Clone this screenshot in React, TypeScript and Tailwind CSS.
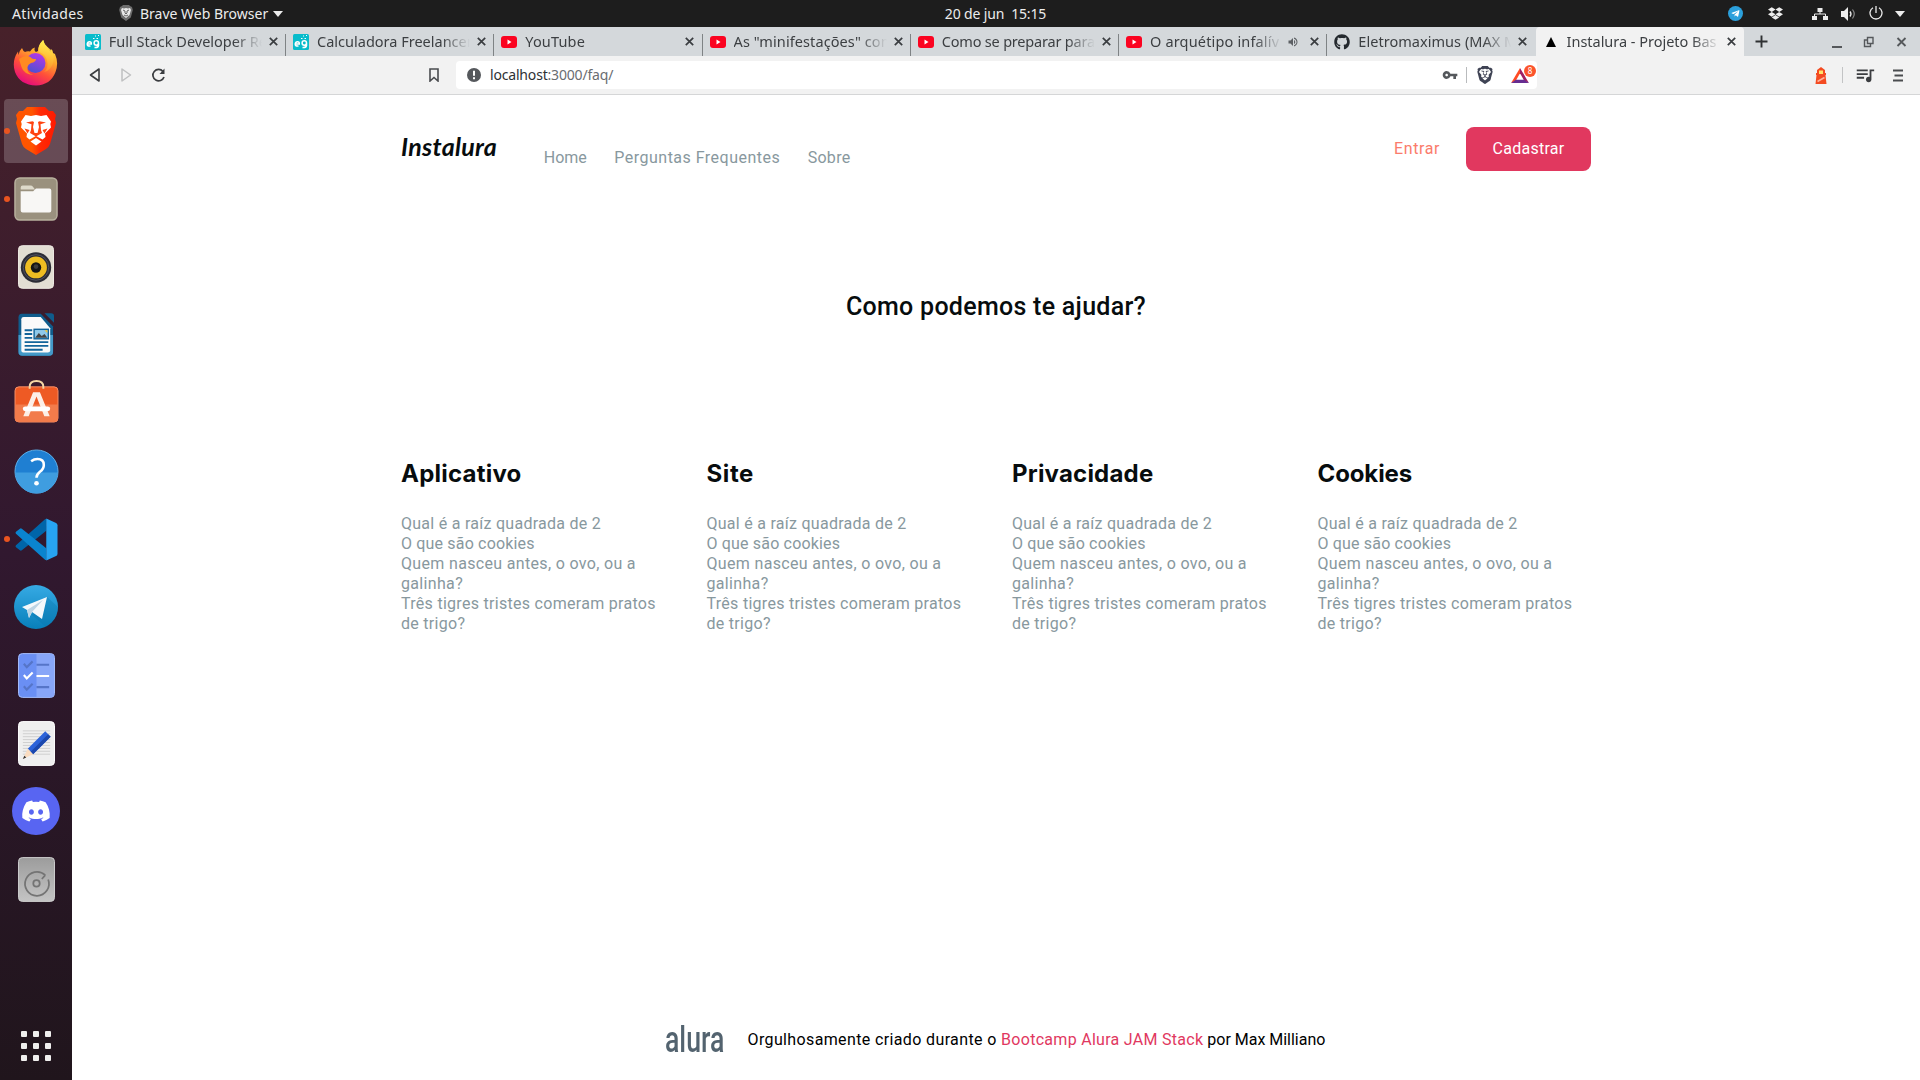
import type { ReactNode } from "react";
import { FaDiscord, FaDropbox, FaGithub, FaTelegramPlane } from "react-icons/fa";
import { MdQueueMusic, MdVolumeUp, MdVpnKey } from "react-icons/md";
import { SiBrave } from "react-icons/si";

/* ---------- Top bar ---------- */

function TopBar() {
  return (
    <header className="grid h-[27px] grid-cols-[1fr_auto_1fr] items-center bg-[#1d1d1d] font-['Noto_Sans',sans-serif] text-[14px] leading-[27px] text-[#ececec]">
      <div className="flex items-center">
        <span className="ml-[12px] w-[107px] tracking-[0.35px]">Atividades</span>
        <svg width="14" height="16" viewBox="0 0 14 16" className="-mt-px">
          <path d="M3 1 4 0h6l1 1 2 1 .8 3-2 7.5L7 16l-4.800-3.500L.2 5 1 2Z" fill="#6d6d6d" />
          <path d="m3 3 2 .5L7 3l2 .5L11 3l1 2-1.500 5L7 13l-3.500-3L2 5Z" fill="#e8e8e8" />
          <path d="m4 5 2 1v2l1 1 1-1V6l2-1M5 10l2 1 2-1" stroke="#666" fill="none" />
        </svg>
        <span className="ml-[7px]">Brave Web Browser</span>
        <svg width="10" height="6" className="ml-[5px]"><path d="M0 0h10L5 6z" fill="#ececec" /></svg>
      </div>
      <span className="ml-[71px] whitespace-pre tracking-[-0.15px]">20 de jun  15:15</span>
      <div className="flex items-center justify-end pr-[15px]">
        <span className="flex size-[15px] items-center justify-center rounded-full bg-[#2ba0dc] text-white">
          <FaTelegramPlane size={9} />
        </span>
        <FaDropbox size={15} className="ml-[25px]" />
        <svg width="16" height="12" viewBox="0 0 16 12" className="ml-[29px]">
          <path d="M5.500 0h5v4h-5zM0 8h5v4H0zM11 8h5v4h-5z" fill="#ececec" />
          <path d="M8 4v2M2.500 8V6h11v2" stroke="#ececec" fill="none" />
        </svg>
        <svg width="15" height="14" viewBox="0 0 15 14" className="ml-[13px]">
          <path d="M0 4h3l4-4v14L3 10H0z" fill="#ececec" />
          <path d="M9 4.500q2 2.500 0 5" stroke="#ececec" fill="none" strokeWidth="1.300" />
          <path d="M11.500 2.500q3.500 4.500 0 9" stroke="#8b8b8b" fill="none" strokeWidth="1.200" />
        </svg>
        <svg width="14" height="14" viewBox="0 0 14 14" className="-mt-px ml-[13px]">
          <path d="M4 1.800a6 6 0 1 0 6 0M7 0v7" stroke="#ececec" fill="none" strokeWidth="1.300" />
        </svg>
        <svg width="10" height="6" className="ml-[12px]"><path d="M0 0h10L5 6z" fill="#ececec" /></svg>
      </div>
    </header>
  );
}

/* ---------- Dock ---------- */

function Firefox() {
  return (
    <svg width="46" height="46" viewBox="0 0 46 46">
      <defs>
        <linearGradient id="fxBody" x1=".8" y1="0" x2=".3" y2="1">
          <stop offset="0" stopColor="#fff44f" />
          <stop offset=".35" stopColor="#ffa72b" />
          <stop offset=".65" stopColor="#ff4f3a" />
          <stop offset="1" stopColor="#e5087f" />
        </linearGradient>
        <linearGradient id="fxTail" x1=".6" y1="0" x2=".5" y2="1">
          <stop offset="0" stopColor="#fff44f" />
          <stop offset="1" stopColor="#ff9a2b" stopOpacity=".6" />
        </linearGradient>
        <linearGradient id="fxGlobe" x1=".7" y1="0" x2=".3" y2="1">
          <stop offset="0" stopColor="#b636e8" />
          <stop offset="1" stopColor="#4a52d0" />
        </linearGradient>
      </defs>
      <path d="M9 8q1 3 3 4 2-1 5-.500Q19 8 22 7.500q-1.500 3 1 4.500l2-1q0-6 5.500-11 .5 5 4 7.500l3 4.500 1-3q1.500 2 1.500 4l2 1q4 9 .5 18-5 13-19.500 13.500Q7 45 2 32-1.500 21 5 11.500L5.500 15Q6 11 9 8Z" fill="url(#fxBody)" />
      <circle cx="22.500" cy="23" r="10" fill="url(#fxGlobe)" />
      <path d="M30 0q-6 6-4 12 6 2 8 8 2 8-3 12 8-2 9.500-11Q42 12 34.500 7 31 4 30 0Z" fill="url(#fxTail)" />
      <path d="M6 19q7-5 12-1.500 1 1.500 5 1.500 0 3-5 4-3 1.500-3.500 4-1 6 6 8-10-1-12-8Z" fill="#ff8a22" />
    </svg>
  );
}

function Brave() {
  return (
    <svg width="40" height="48" viewBox="0 0 40 48">
      <defs>
        <linearGradient id="braveBody" x1="0" x2="1">
          <stop offset=".4" stopColor="#ff5500" />
          <stop offset=".6" stopColor="#ff2a05" />
          <stop offset="1" stopColor="#ff1a00" />
        </linearGradient>
      </defs>
      <path d="m11 0h18l4 4 4 0 3 4-1 4 1 4-6 21q-1 3-4 5l-10 6-10-6q-3-2-4-5L0 16l1-4-1-4 3-4 4 0Z" fill="url(#braveBody)" />
      <path d="M9.500 8 15 9l5-1 5 1 5.500-1 4.500 6.500-.7 2.500.7 3.500-6 6 .5 3.500-3 2.500-6.500-3.500-6.500 3.500-3-2.500.5-3.500-6-6 .7-3.500-.7-2.500Z" fill="#fff" />
      <path d="m10 15.500 6.500-1.200L18 15l-1 5 1.500 6h3L23 20l-1-5 1.500-.700L30 15.500l-5.500 1.800.5 5.700 1 3-6 3.500-6-3.500 1-3 .5-5.700Z" fill="#ff4310" />
      <path d="m8.500 21.500 5 1.500-2 3.500Zm23 0-5 1.500 2 3.500Z" fill="#ff4310" />
      <path d="m20 31 5.500 3.500-5.500 4-5.500-4Z" fill="#fff" />
    </svg>
  );
}

function Files() {
  return (
    <svg width="44" height="44" viewBox="0 0 46 46">
      <rect x="1" y="1" width="44" height="44" rx="5" fill="#9a917e" stroke="#b9b29f" strokeWidth="1.500" />
      <path d="M7 13V11q0-2 2-2h8q2 0 3 1.500l2 2.500Z" fill="#dedacb" />
      <path d="M7 15h13l3-3h14q2 0 2 2v21q0 2-2 2H9q-2 0-2-2Z" fill="#f8f7f5" />
    </svg>
  );
}

function Rhythmbox() {
  return (
    <svg width="36" height="44" viewBox="0 0 38 46">
      <rect x=".5" y=".5" width="37" height="45" rx="4" fill="#e2ded3" stroke="#f3f0e9" />
      <circle cx="19" cy="23.500" r="16" fill="#2b2c35" />
      <circle cx="19" cy="23.500" r="13.500" fill="none" stroke="#545663" />
      <circle cx="19" cy="23.500" r="11.500" fill="#eebd22" />
      <circle cx="19" cy="23.500" r="5.500" fill="#151515" />
      <circle cx="19" cy="22.500" r="2.500" fill="#3c3c3c" />
    </svg>
  );
}

function Writer() {
  return (
    <svg width="36" height="44" viewBox="0 0 38 46">
      <path d="M4 .5h20L37 14v27q0 4-4 4H4.500q-4 0-4-4V4.500q0-4 3.500-4Z" fill="#0f5c8c" />
      <path d="M.5 23H37v18q0 4-4 4H4.500q-4 0-4-4Z" fill="#4499c8" />
      <path d="M28 0h7q3 0 3 3v7Z" fill="#0f5c8c" />
      <path d="M6 4h18l10 12v23q0 2.500-2.500 2.500h-26Q3.500 41.500 3.500 39V6.500Q3.500 4 6 4Z" fill="#fafafa" />
      <path d="M7 18h8M7 22h8M7 26h8M7 30.500h25M7 34.500h25M7 38.500h19" stroke="#12649a" strokeWidth="2" />
      <rect x="17" y="17" width="15" height="10" fill="#8fc9ea" stroke="#12649a" strokeWidth="1.500" />
      <path d="m18 26 4-5 3 3 3-2 3 4Z" fill="#444" />
      <path d="M28 18h3v3Z" fill="#f4c22b" />
    </svg>
  );
}

function Software() {
  return (
    <svg width="45" height="43" viewBox="0 0 46 44" className="-mt-[4px]">
      <rect x="1" y="7" width="44" height="36" rx="4" fill="#ee5a24" stroke="#f79068" />
      <path d="M1 25h44v14q0 4-4 4H5q-4 0-4-4Z" fill="#f27b4b" />
      <path d="M16 9V7q0-6 7-6t7 6v2" fill="none" stroke="#f5d7a4" strokeWidth="2" />
      <path d="M19.500 12.500h7l10 24.500h-5.500l-8-20-8 20h-5.500Z" fill="#fcefe7" />
      <rect x="9" y="27" width="28" height="5" rx="2.500" fill="#fff" />
    </svg>
  );
}

function Help() {
  return (
    <svg width="45" height="45" viewBox="0 0 46 46">
      <circle cx="23" cy="23" r="22" fill="#1f7fd2" stroke="#5fb0ea" />
      <path d="M1.500 24h43a21.500 21.500 0 0 1-43 0Z" fill="#3f9de0" />
      <path d="M17.500 12.500q3-2.200 6.500-2.200 6.500 0 6.500 6 0 4-4 7-3.500 3-3.500 6" fill="none" stroke="#fff" strokeWidth="2.600" />
      <circle cx="23" cy="35" r="2.400" fill="#fff" />
    </svg>
  );
}

function VsCode() {
  return (
    <svg width="43" height="43" viewBox="0 0 44 44">
      <path d="M32 1v12L7 33q-1 .8-2 0l-4-3q-1-1 0-2L31 1Z" fill="#0065a9" />
      <path d="M32 43V31L7 11q-1-.8-2 0l-4 3q-1 1 0 2l30 27Z" fill="#0a84cf" />
      <path d="M32 .5 42 5q1.500.7 1.500 2.500v29q0 1.800-1.500 2.500l-10 4.500Z" fill="#27a4f2" />
    </svg>
  );
}

function Telegram() {
  return (
    <svg width="44" height="44" viewBox="0 0 44 44">
      <defs>
        <linearGradient id="tg" x1="0" y1="0" x2="0" y2="1">
          <stop offset="0" stopColor="#36aae4" />
          <stop offset="1" stopColor="#087fba" />
        </linearGradient>
      </defs>
      <circle cx="22" cy="22" r="22" fill="url(#tg)" />
      <path d="M33 12 44 22q-1 13-12 20L18 30Z" fill="#0876ad" opacity=".35" />
      <path d="m8 22 25-10-5 22-10-7-3 6-2-8Z" fill="#f4f8fb" />
      <path d="m13 25 16-10-11 12-3 6Z" fill="#bcd4e4" />
    </svg>
  );
}

function Todo() {
  return (
    <svg width="37" height="45" viewBox="0 0 38 46">
      <rect x=".5" y=".5" width="37" height="45" rx="4" fill="#6a8ff4" stroke="#a5bdfb" />
      <path d="M19 1h14q4 0 4 4v36q0 4-4 4H19Z" fill="#88a6f8" />
      <g fill="none" strokeWidth="2.200">
        <path d="m6 11 3 3.500 6-6M19 12h13M6 34l3 3.500 6-6M19 35h13" stroke="#5675c8" />
        <path d="m6 22.500 3 3.500 6-6M19 23.500h13" stroke="#fff" />
      </g>
    </svg>
  );
}

function Editor() {
  return (
    <svg width="37" height="45" viewBox="0 0 38 46">
      <rect x=".5" y=".5" width="37" height="45" rx="4" fill="#efefef" stroke="#fff" />
      <path d="M5 10h28M5 13h28M5 16h28M5 19h28M5 22h28M5 25h28M5 28h28M5 31h28M5 34h28" stroke="#cfcfcf" />
      <path d="m28 10.500 5.500 5.500L15.500 34l-5.500-5.500Z" fill="#2b62d9" />
      <path d="m31 13.500 2.500 2.500L15.500 34l-2.500-2.500Z" fill="#1a47ad" />
      <path d="m10 28.500 5.500 5.500L5 39Z" fill="#fadcc0" />
      <path d="m6.500 35.500 2 2L5 39Z" fill="#333" />
    </svg>
  );
}

function Disk() {
  return (
    <svg width="37" height="45" viewBox="0 0 38 46">
      <defs>
        <linearGradient id="disk" x1="0" y1="0" x2="0" y2="1">
          <stop offset="0" stopColor="#9c9c9c" />
          <stop offset="1" stopColor="#c4c4c4" />
        </linearGradient>
      </defs>
      <rect x=".5" y=".5" width="37" height="45" rx="4" fill="url(#disk)" stroke="#cecece" />
      <path d="M28 18.500A12.300 12.300 0 1 0 31 23M28 18.500l-3.500 4" fill="none" stroke="#747474" strokeWidth="1.800" />
      <circle cx="19" cy="27" r="3.300" fill="none" stroke="#747474" strokeWidth="1.800" />
    </svg>
  );
}

function DockItem({ children, running, active }: { children: ReactNode; running?: boolean; active?: boolean }) {
  return (
    <div className={active ? "relative mx-1 flex h-16 items-center justify-center rounded bg-white/20" : "relative mx-1 flex h-16 items-center justify-center"}>
      {running && <i className="absolute top-[29px] left-0 size-[6px] rounded-full bg-[#e95420]" />}
      {children}
    </div>
  );
}

function Dock() {
  return (
    <aside className="flex w-[72px] shrink-0 flex-col justify-between bg-linear-to-b from-[#47212a] via-[#31182f] via-50% to-[#20151c]">
      <div className="flex flex-col gap-1 pt-[4px]">
        <DockItem><Firefox /></DockItem>
        <DockItem running active><Brave /></DockItem>
        <DockItem running><Files /></DockItem>
        <DockItem><Rhythmbox /></DockItem>
        <DockItem><Writer /></DockItem>
        <DockItem><Software /></DockItem>
        <DockItem><Help /></DockItem>
        <DockItem running><VsCode /></DockItem>
        <DockItem><Telegram /></DockItem>
        <DockItem><Todo /></DockItem>
        <DockItem><Editor /></DockItem>
        <DockItem>
          <span className="flex size-12 items-center justify-center rounded-full bg-[#5865f2] text-white"><FaDiscord size={30} /></span>
        </DockItem>
        <DockItem><Disk /></DockItem>
      </div>
      <div className="mb-[19px] grid grid-cols-[6px_6px_6px] justify-center gap-[6px]">
        {Array.from({ length: 9 }, (_, i) => <i key={i} className="size-[6px] rounded-[1px] bg-[#f0efee]" />)}
      </div>
    </aside>
  );
}

/* ---------- Browser chrome ---------- */

function CloseIcon() {
  return <svg width="9" height="9" viewBox="0 0 9 9" className="shrink-0"><path d="m.8.8 7.400 7.400M8.200.8.800 8.200" stroke="#3a3d40" strokeWidth="1.700" /></svg>;
}

const youtube = (
  <svg width="16" height="16" viewBox="0 0 16 16"><rect y="2" width="16" height="12" rx="3" fill="#fb0320" /><path d="m6.500 5.500 4 2.500-4 2.500Z" fill="#fff" /></svg>
);
const freelancer = (
  <svg width="16" height="16" viewBox="0 0 16 16">
    <rect width="16" height="16" rx="1.500" fill="#08bccb" />
    <path d="M2 10h4.300q.2-2.300-1.800-2.300T2.200 10q0 2.500 3.300 2M13.500 9a2.200 2.200 0 1 0-4.400 0 2.200 2.200 0 0 0 4.400 0v2.500q-.5 2.500-4 2" fill="none" stroke="#fff" strokeWidth="1.500" />
    <path d="M8 4.500h1.500M11.500 4.500H13M10 2h1M13 1.500h1" stroke="#fff" />
  </svg>
);
const github = <FaGithub size={16} color="#24292e" />;
const vercel = <svg width="16" height="16" viewBox="0 0 16 16"><path d="m8 3 5 10H3Z" fill="#000" /></svg>;

interface TabData { icon: ReactNode; title: string; track?: string; audio?: boolean; active?: boolean; sep?: boolean }

const tabs: TabData[] = [
  { icon: freelancer, title: "Full Stack Developer Re", sep: true },
  { icon: freelancer, title: "Calculadora Freelancer", sep: true },
  { icon: youtube, title: "YouTube", track: "tracking-[0.15px]", sep: true },
  { icon: youtube, title: 'As "minifestações" con', track: "tracking-[0.09px]", sep: true },
  { icon: youtube, title: "Como se preparar para", track: "tracking-[-0.2px]", sep: true },
  { icon: youtube, title: "O arquétipo infalív", track: "tracking-[0.16px]", audio: true, sep: true },
  { icon: github, title: "Eletromaximus (MAX M", track: "tracking-[0.04px]" },
  { icon: vercel, title: "Instalura - Projeto Bas", track: "tracking-[-0.020px]", active: true },
];

function Tab({ tab }: { tab: TabData }) {
  return (
    <div className={tab.active ? "flex h-full w-[208.250px] items-center rounded-t bg-[#f2f2f2] pl-[7px]" : "flex h-full w-[208.250px] items-center pl-[7px]"}>
      <span className="mt-[1px] flex w-4 shrink-0 justify-center">{tab.icon}</span>
      <span className={`ml-[8px] overflow-hidden whitespace-nowrap [mask-image:linear-gradient(to_right,#000_calc(100%-28px),transparent)] ${tab.audio ? "w-[132px]" : "w-[153px]"} ${tab.track ?? ""}`}>
        {tab.title}
      </span>
      {tab.audio && <MdVolumeUp size={12} className="ml-[5px] shrink-0 text-[#5d6064]" />}
      <span className={tab.audio ? "ml-[11px]" : "ml-[7px]"}><CloseIcon /></span>
      {tab.sep && <i className="mt-[7px] ml-auto h-[22px] w-px shrink-0 bg-[#7f8385]" />}
    </div>
  );
}

function TabStrip() {
  return (
    <div className="flex h-[29px] items-center bg-[#d4d8db] pl-[5.800px] font-['Noto_Sans',sans-serif] text-[14.5px] leading-[29px] text-[#3c3f42]">
      {tabs.map((t) => <Tab key={t.title} tab={t} />)}
      <svg width="13" height="13" className="ml-[11px]"><path d="M6.500.5v12M.5 6.500h12" stroke="#2f3133" strokeWidth="1.900" /></svg>
      <svg width="75" height="12" viewBox="0 0 75 12" className="mr-[13px] ml-auto">
        <path d="M0 11h10" stroke="#55585b" strokeWidth="2" />
        <path d="M35.500 1.500h5.500v6h-5.500zM35 4h-2.500v6.500h6V8" fill="none" stroke="#55585b" strokeWidth="1.400" />
        <path d="m65.500 2 8 8M73.500 2l-8 8" stroke="#55585b" strokeWidth="1.800" />
      </svg>
    </div>
  );
}

function Toolbar() {
  return (
    <div className="flex h-[39px] items-center border-b border-[#d5d6d7] bg-[#f2f2f2]">
      <svg width="11" height="16" viewBox="0 0 11 16" className="ml-[16.500px]"><path d="M10 2v12L1.500 8Z" fill="none" stroke="#3b3d40" strokeWidth="1.600" strokeLinejoin="round" /></svg>
      <svg width="11" height="16" viewBox="0 0 11 16" className="ml-[21px]"><path d="M1 2v12l8.500-6Z" fill="none" stroke="#bfc0c1" strokeWidth="1.500" strokeLinejoin="round" /></svg>
      <svg width="15" height="15" viewBox="0 0 15 15" className="ml-[19px]"><path d="M12 3.500A5.700 5.700 0 1 0 13 9" fill="none" stroke="#3b3d40" strokeWidth="1.700" /><path d="M13.500.500v5.500H8.500Z" fill="#3b3d40" /></svg>
      <svg width="10" height="14" viewBox="0 0 10 14" className="ml-[263.500px]"><path d="M1 1h8v12L5 9.500 1 13Z" fill="none" stroke="#4a4c4f" strokeWidth="1.600" /></svg>
      <div className="ml-[17px] flex h-7 w-[1081px] items-center rounded bg-white pl-[11px] font-['Noto_Sans',sans-serif] text-[14px] leading-7">
        <svg width="14" height="14" viewBox="0 0 14 14"><circle cx="7" cy="7" r="7" fill="#55585c" /><path d="M7 2.800v5M7 9.300v2" stroke="#fff" strokeWidth="2" /></svg>
        <span className="ml-[9px] tracking-[-0.18px] text-[#6a6d71]"><span className="text-[#2e3134]">localhost</span>:3000/faq/</span>
        <MdVpnKey size={16} className="ml-auto text-[#55585c]" />
        <i className="ml-[8px] h-4 w-px bg-[#b9bbbd]" />
        <SiBrave size={18} className="ml-[9px] text-[#3f4354]" />
        <span className="relative mr-[8px] ml-[17px]">
          <svg width="18" height="15" viewBox="0 0 19 16">
            <path d="M9.500 0 0 16l5-2.500 4.500-8Z" fill="#ff4b24" />
            <path d="M9.500 0 19 16l-5-2.500-4.500-8Z" fill="#9e1f63" />
            <path d="M0 16h19l-5-3.500H5Z" fill="#662d91" />
          </svg>
          <b className="absolute -top-[3px] left-[13px] flex size-[12px] items-center justify-center rounded-full bg-[#fb542b] text-[8px] leading-none font-normal text-white">8</b>
        </span>
      </div>
      <svg width="12" height="17" viewBox="0 0 12 17" className="ml-auto">
        <path d="M2 6V3l4-3 4 3v3h1v2h-.5l1 9H.5l1-9H1V6Z" fill="#f44b21" />
        <path d="M4 3.500h4V7H4Z" fill="#ffe36b" />
        <path d="m2.500 14.500 7-4" stroke="#ffb29c" strokeWidth="1.600" />
      </svg>
      <i className="ml-[15px] h-4 w-px bg-[#c3c4c5]" />
      <MdQueueMusic size={22} className="ml-[11px] text-[#3b3d40]" />
      <svg width="10" height="13" className="mr-[17px] ml-[17px]"><path d="M0 1.500h10M1.500 6.500H10M0 11.500h10" stroke="#4a4c4f" strokeWidth="1.800" /></svg>
    </div>
  );
}

/* ---------- FAQ page ---------- */

const categories = [
  { title: "Aplicativo", track: "tracking-[0.220px]" },
  { title: "Site", track: "tracking-[0.600px]" },
  { title: "Privacidade", track: "tracking-[0.200px]" },
  { title: "Cookies", track: "tracking-[-0.120px]" },
];

const questions = [
  { text: "Qual é a raíz quadrada de 2", track: "tracking-[0.270px]" },
  { text: "O que são cookies", track: "tracking-[0.170px]" },
  { text: "Quem nasceu antes, o ovo, ou a galinha?", track: "tracking-[0.330px]" },
  { text: "Três tigres tristes comeram pratos de trigo?", track: "tracking-[0.290px]" },
];

function FaqPage() {
  return (
    <div className="flex flex-1 flex-col bg-white font-['Roboto',sans-serif] text-base leading-5">
      <div className="mx-auto flex w-[1190px] flex-1 flex-col">
        <nav className="mt-8 flex h-11 items-center text-[#88989e]">
          <a className="-mt-[5px] w-[142.800px] pb-[2px] font-['Lato',sans-serif] text-[25px] leading-7 font-bold tracking-[0.300px] text-[#070c0e] italic">Instalura</a>
          <div className="flex gap-[27.500px] pt-[17px]">
            <a>Home</a>
            <a className="tracking-[0.480px]">Perguntas Frequentes</a>
            <a className="tracking-[0.300px]">Sobre</a>
          </div>
          <a className="ml-auto tracking-[0.600px] text-[#fb7b6b]">Entrar</a>
          <button className="ml-[26px] h-11 w-[125px] rounded-lg bg-[#e1385f] tracking-[0.250px] text-white">Cadastrar</button>
        </nav>
        <h1 className="mt-[120px] text-center text-[25px] leading-8 font-medium tracking-[0.280px] text-[#070c0e]">Como podemos te ajudar?</h1>
        <section className="mt-[137px] grid grid-cols-[repeat(4,275px)] gap-x-[30.500px]">
          {categories.map((c) => (
            <div key={c.title}>
              <h2 className={`font-['Inter',sans-serif] text-2xl leading-7 font-bold text-[#070c0e] ${c.track}`}>{c.title}</h2>
              <ul className="mt-[26px] w-[266px] text-[#88989e]">
                {questions.map((q) => <li key={q.text} className={q.track}>{q.text}</li>)}
              </ul>
            </div>
          ))}
        </section>
        <footer className="mt-auto mb-[22px] flex items-center pl-[264px] text-black">
          <span className="w-[82.500px]">
            <span className="inline-block origin-left scale-x-[0.74] text-[36px] leading-9 font-medium text-[#53636f]">alura</span>
          </span>
          <p className="whitespace-nowrap">
            <span className="tracking-[0.370px]">Orgulhosamente criado durante o </span>
            <a className="tracking-[0.290px] text-[#e1385f]">Bootcamp Alura JAM Stack</a>
            <span className="tracking-[-0.020px]"> por Max Milliano</span>
          </p>
        </footer>
      </div>
    </div>
  );
}

export default function App() {
  return (
    <div className="flex h-[1080px] w-[1920px] flex-col overflow-hidden">
      <TopBar />
      <div className="flex min-h-0 flex-1">
        <Dock />
        <main className="flex min-w-0 flex-1 flex-col">
          <TabStrip />
          <Toolbar />
          <FaqPage />
        </main>
      </div>
    </div>
  );
}
